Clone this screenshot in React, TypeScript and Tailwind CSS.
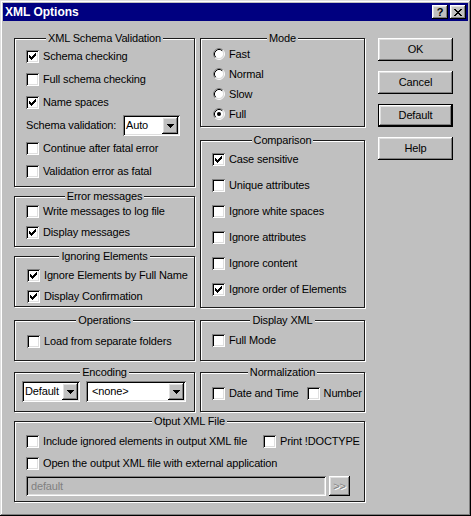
import React from "react";

const raised =
  "shadow-[inset_-1px_-1px_#000,inset_1px_1px_#fff,inset_-2px_-2px_#808080,inset_2px_2px_#dfdfdf]";
const sunken =
  "shadow-[inset_1px_1px_#808080,inset_-1px_-1px_#fff,inset_2px_2px_#000,inset_-2px_-2px_#dfdfdf]";

const tick = [
  [0, 2],
  [1, 3],
  [2, 4],
  [3, 3],
  [4, 2],
  [5, 1],
  [6, 0],
];

const Check = ({ checked }: { checked?: boolean }) => (
  <span className={`flex h-[13px] w-[13px] shrink-0 items-center justify-center bg-white ${sunken}`}>
    {checked && (
      <svg width="7" height="7" viewBox="0 0 7 7" shapeRendering="crispEdges">
        {tick.map(([x, y]) => (
          <rect key={x} x={x} y={y} width="1" height="3" fill="#000" />
        ))}
      </svg>
    )}
  </span>
);

const Radio = ({ checked }: { checked?: boolean }) => (
  <svg width="12" height="12" viewBox="0 0 12 12" className="shrink-0">
    <circle cx="6" cy="6" r="4.5" fill="#fff" />
    <path d="M2.11 9.89 A5.5 5.5 0 0 1 9.89 2.11" stroke="#808080" fill="none" />
    <path d="M9.89 2.11 A5.5 5.5 0 0 1 2.11 9.89" stroke="#fff" fill="none" />
    <path d="M2.82 9.18 A4.5 4.5 0 0 1 9.18 2.82" stroke="#000" fill="none" />
    <path d="M9.18 2.82 A4.5 4.5 0 0 1 2.82 9.18" stroke="#dfdfdf" fill="none" />
    {checked && <circle cx="6" cy="6" r="2" fill="#000" />}
  </svg>
);

const CheckRow = ({ label, checked, h }: { label: string; checked?: boolean; h: string }) => (
  <div className={`flex items-center gap-[4px] ${h}`}>
    <Check checked={checked} />
    <span className="whitespace-nowrap">{label}</span>
  </div>
);

const Group = ({
  title,
  className,
  children,
}: {
  title: string;
  className: string;
  children?: React.ReactNode;
}) => (
  <div
    className={`relative shrink-0 border border-[#1c1c1c] shadow-[inset_1px_1px_#fff,1px_1px_#fff] ${className}`}
  >
    <div className="absolute inset-x-0 -top-[7px] flex justify-center">
      <span className="bg-[#c0c0c0] px-[2px] leading-[13px]">{title}</span>
    </div>
    {children}
  </div>
);

const Arrow = () => (
  <svg width="7" height="4" viewBox="0 0 7 4" shapeRendering="crispEdges">
    <rect x="0" y="0" width="7" height="1" fill="#000" />
    <rect x="1" y="1" width="5" height="1" fill="#000" />
    <rect x="2" y="2" width="3" height="1" fill="#000" />
    <rect x="3" y="3" width="1" height="1" fill="#000" />
  </svg>
);

const Combo = ({ value, className }: { value: string; className: string }) => (
  <div className={`flex h-[21px] shrink-0 items-stretch bg-white p-[2px] ${sunken} ${className}`}>
    <span className="flex flex-1 items-center pl-[1px] whitespace-nowrap">{value}</span>
    <span className={`flex w-[16px] items-center justify-center bg-[#c0c0c0] ${raised}`}>
      <Arrow />
    </span>
  </div>
);

const Button = ({ label, isDefault }: { label: string; isDefault?: boolean }) => (
  <div
    className={`flex h-[23px] w-[75px] items-center justify-center ${
      isDefault ? "border border-black shadow-[inset_-1px_-1px_#000,inset_1px_1px_#fff,inset_-2px_-2px_#808080,inset_2px_2px_#dfdfdf]" : raised
    }`}
  >
    {label}
  </div>
);

const closeX = [
  [0, 0, 2, 6, 2],
  [1, 1, 2, 5, 2],
  [2, 2, 4, -1, 0],
  [3, 3, 2, -1, 0],
  [4, 2, 4, -1, 0],
  [5, 1, 2, 5, 2],
  [6, 0, 2, 6, 2],
];

export default function App() {
  return (
    <div
      className={`flex h-[516px] w-[471px] flex-col bg-[#c0c0c0] p-[3px] font-['Liberation_Sans',Arial,sans-serif] text-[11px] leading-[13px] tracking-[-0.15px] text-black shadow-[inset_-1px_-1px_#000,inset_1px_1px_#dfdfdf,inset_-2px_-2px_#808080,inset_2px_2px_#fff]`}
    >
      {/* title bar */}
      <div className="flex h-[18px] items-center justify-between bg-[#000080] pl-[2px] pr-[2px]">
        <span className="text-[12px] font-bold tracking-normal text-white">XML Options</span>
        <div className="flex gap-[2px]">
          <span className={`flex h-[14px] w-[16px] items-center justify-center bg-[#c0c0c0] pt-[1px] text-[11px] font-bold ${raised}`}>
            ?
          </span>
          <span className={`flex h-[14px] w-[16px] items-center justify-center bg-[#c0c0c0] ${raised}`}>
            <svg width="8" height="7" viewBox="0 0 8 7" shapeRendering="crispEdges">
              {closeX.map(([y, x1, w1, x2, w2]) => (
                <g key={y}>
                  <rect x={x1} y={y} width={w1} height="1" fill="#000" />
                  {x2 >= 0 && <rect x={x2} y={y} width={w2} height="1" fill="#000" />}
                </g>
              ))}
            </svg>
          </span>
        </div>
      </div>

      <div className="flex pl-[11px] pt-[17px]">
        <div className="flex w-[351px] flex-col">
          <div className="flex gap-[5px]">
            <div className="flex w-[181px] flex-col">
              <Group title="XML Schema Validation" className="h-[149px] pl-[11px] pt-[6px]">
                <CheckRow h="h-[23px]" label="Schema checking" checked />
                <CheckRow h="h-[23px]" label="Full schema checking" />
                <CheckRow h="h-[23px]" label="Name spaces" checked />
                <div className="flex h-[23px] items-center">
                  <span className="w-[97px] whitespace-nowrap">Schema validation:</span>
                  <Combo value="Auto" className="w-[57px]" />
                </div>
                <CheckRow h="h-[23px]" label="Continue after fatal error" />
                <CheckRow h="h-[23px]" label="Validation error as fatal" />
              </Group>
              <Group title="Error messages" className="mt-[9px] h-[51px] pl-[11px] pt-[4px]">
                <CheckRow h="h-[21px]" label="Write messages to log file" />
                <CheckRow h="h-[21px]" label="Display messages" checked />
              </Group>
              <Group title="Ignoring Elements" className="mt-[9px] h-[51px] pl-[12px] pt-[8px]">
                <CheckRow h="h-[21px]" label="Ignore Elements by Full Name" checked />
                <CheckRow h="h-[21px]" label="Display Confirmation" checked />
              </Group>
            </div>
            <div className="flex w-[165px] flex-col">
              <Group title="Mode" className="h-[89px] pl-[12px] pt-[5px]">
                {["Fast", "Normal", "Slow", "Full"].map((m) => (
                  <div key={m} className="flex h-[20px] items-center gap-[4px]">
                    <Radio checked={m === "Full"} />
                    <span>{m}</span>
                  </div>
                ))}
              </Group>
              <Group title="Comparison" className="mt-[13px] h-[168px] pl-[11px] pt-[5px]">
                <CheckRow h="h-[26px]" label="Case sensitive" checked />
                <CheckRow h="h-[26px]" label="Unique attributes" />
                <CheckRow h="h-[26px]" label="Ignore white spaces" />
                <CheckRow h="h-[26px]" label="Ignore attributes" />
                <CheckRow h="h-[26px]" label="Ignore content" />
                <CheckRow h="h-[26px]" label="Ignore order of Elements" checked />
              </Group>
            </div>
          </div>

          <div className="mt-[12px] flex gap-[5px]">
            <Group title="Operations" className="h-[41px] w-[181px] pl-[12px] pt-[10px]">
              <CheckRow h="h-[21px]" label="Load from separate folders" />
            </Group>
            <Group title="Display XML" className="h-[41px] w-[165px] pl-[11px] pt-[9px]">
              <CheckRow h="h-[21px]" label="Full Mode" />
            </Group>
          </div>

          <div className="mt-[11px] flex gap-[5px]">
            <Group title="Encoding" className="flex h-[40px] w-[181px] gap-[6px] pl-[7px] pt-[8px]">
              <Combo value="Default" className="w-[58px]" />
              <Combo value="<none>" className="w-[100px] [&>span:first-child]:pl-[4px]" />
            </Group>
            <Group title="Normalization" className="flex h-[40px] w-[165px] gap-[8px] pl-[11px] pt-[10px]">
              <CheckRow h="h-[21px]" label="Date and Time" />
              <CheckRow h="h-[21px]" label="Number" />
            </Group>
          </div>

          <Group title="Otput XML File" className="mt-[9px] h-[81px] w-[351px] pl-[11px] pt-[8px]">
            <div className="flex h-[22px] items-center">
              <div className="w-[237px]">
                <CheckRow h="h-[22px]" label="Include ignored elements in output XML file" />
              </div>
              <CheckRow h="h-[22px]" label="Print !DOCTYPE" />
            </div>
            <CheckRow h="h-[22px]" label="Open the output XML file with external application" />
            <div className="mt-[2px] flex gap-[3px]">
              <div className={`flex h-[20px] w-[300px] items-center pl-[5px] text-[#808080] ${sunken}`}>default</div>
              <div className={`flex h-[20px] w-[21px] items-center justify-center text-[#808080] [text-shadow:1px_1px_#fff] ${raised}`}>
                &gt;&gt;
              </div>
            </div>
          </Group>
        </div>

        <div className="ml-[13px] flex flex-col gap-[10px]">
          <Button label="OK" />
          <Button label="Cancel" />
          <Button label="Default" isDefault />
          <Button label="Help" />
        </div>
      </div>
    </div>
  );
}
